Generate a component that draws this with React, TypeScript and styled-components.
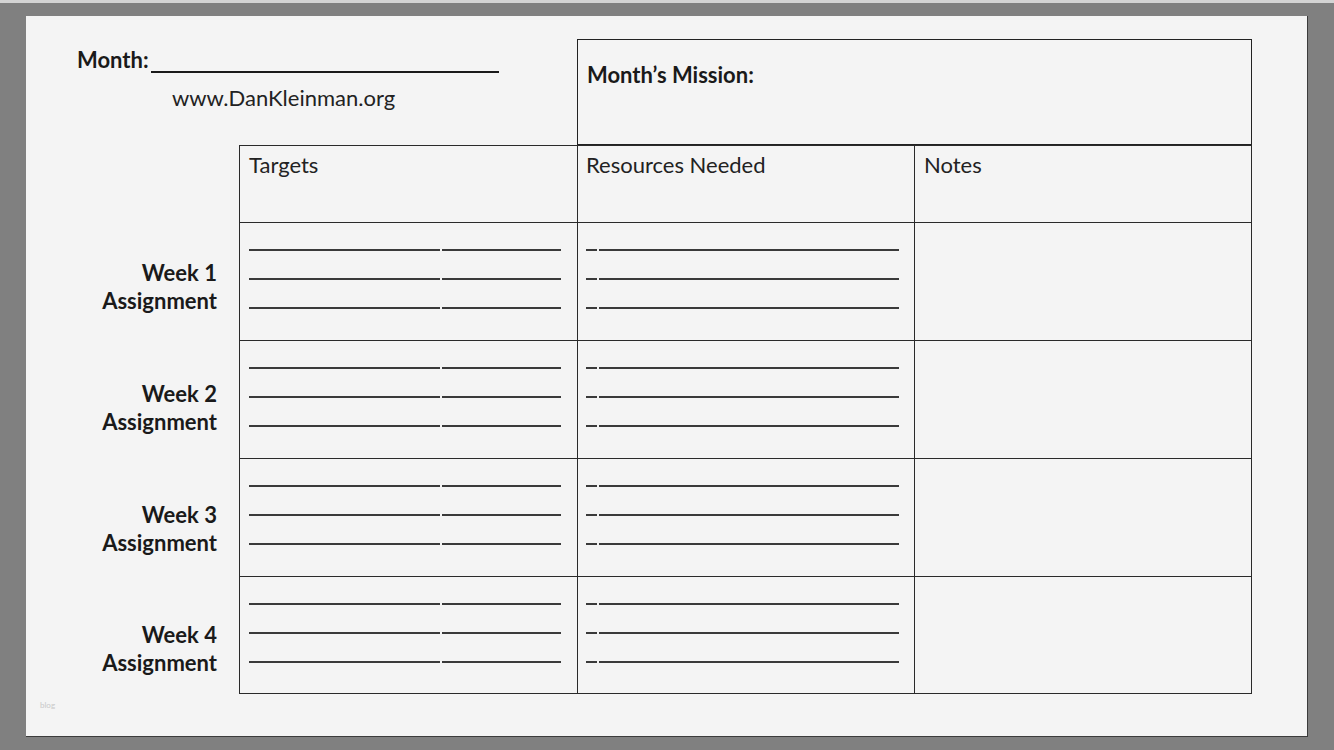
import React from "react";
import styled, { createGlobalStyle } from "styled-components";

const GlobalStyle = createGlobalStyle`
  html, body {
    margin: 0;
    padding: 0;
    background: #808080;
  }
  * {
    box-sizing: border-box;
  }
`;

const FONT = `"Lato", "Open Sans", "Liberation Sans", sans-serif`;

// week number + how far its label sits below the row centre
const weeks = [
  { n: 1, drop: 12 },
  { n: 2, drop: 18 },
  { n: 3, drop: 23 },
  { n: 4, drop: 27 },
];

const App: React.FC = () => {
  return (
    <>
      <GlobalStyle />
      <Frame>
        <Page>
          <TopRow>
            <MonthBlock>
              <MonthRow>
                <BoldText>Month:</BoldText>
                <Blank />
              </MonthRow>
              <Url>www.DanKleinman.org</Url>
            </MonthBlock>
            <MissionBox>
              <BoldText>Month’s Mission:</BoldText>
            </MissionBox>
          </TopRow>

          <BodyRow>
            <Labels>
              <HeaderSpacer />
              {weeks.map((w) => (
                <LabelCell key={w.n} $drop={w.drop}>
                  <BoldText>Week {w.n}</BoldText>
                  <BoldText>Assignment</BoldText>
                </LabelCell>
              ))}
              <Blog>blog</Blog>
            </Labels>

            <Table>
              <HeadCell $pad={9}>Targets</HeadCell>
              <HeadCell $pad={8}>Resources Needed</HeadCell>
              <HeadCell $pad={9}>Notes</HeadCell>
              {weeks.map((w) => (
                <React.Fragment key={w.n}>
                  <Cell $pad={9}>
                    {[0, 1, 2].map((i) => (
                      <WriteLine key={i}>
                        <Seg $w={191} />
                        <Seg $w={119} />
                      </WriteLine>
                    ))}
                  </Cell>
                  <Cell $pad={8}>
                    {[0, 1, 2].map((i) => (
                      <WriteLine key={i}>
                        <Seg $w={11} />
                        <Seg $w={300} />
                      </WriteLine>
                    ))}
                  </Cell>
                  <Cell $pad={9} />
                </React.Fragment>
              ))}
            </Table>
          </BodyRow>
        </Page>
      </Frame>
    </>
  );
};

export default App;

const Frame = styled.div`
  width: 1334px;
  height: 750px;
  border-top: 3px solid #d4d4d4;
  padding: 13px 26px 0 26px;
  background: #808080;
`;

const Page = styled.div`
  width: 1282px;
  height: 721px;
  background: #f4f4f4;
  border-right: 1px solid #3c3c3c;
  border-bottom: 1px solid #3c3c3c;
  padding-top: 23px;
  font-family: ${FONT};
  color: #1a1a1a;
`;

const TopRow = styled.div`
  display: flex;
  height: 106px;
`;

const MonthBlock = styled.div`
  width: 551px;
  padding: 9px 0 0 51px;
`;

const MonthRow = styled.div`
  display: flex;
  align-items: flex-end;
`;

const BoldText = styled.div`
  font-weight: 700;
  font-size: 22px;
  line-height: 24px;
  white-space: nowrap;
`;

const Blank = styled.div`
  width: 348px;
  height: 24px;
  margin-left: 2px;
  border-bottom: 2px solid #1a1a1a;
  margin-bottom: -1px;
`;

const Url = styled.div`
  margin: 14px 0 0 95px;
  font-size: 22px;
  line-height: 24px;
  color: #222;
`;

const MissionBox = styled.div`
  width: 675px;
  height: 106px;
  border: 1px solid #222;
  padding: 23px 9px 0 9px;
`;

const BodyRow = styled.div`
  display: flex;
  align-items: flex-start;
`;

const Labels = styled.div`
  width: 213px;
  display: flex;
  flex-direction: column;
`;

const HeaderSpacer = styled.div`
  height: 77px;
`;

const LabelCell = styled.div<{ $drop: number }>`
  height: 118px;
  padding: ${(p) => p.$drop}px 22px 0 0;
  display: flex;
  flex-direction: column;
  justify-content: center;
  align-items: flex-end;
  gap: 4px;
`;

const Blog = styled.div`
  margin: 6px 0 0 14px;
  font-size: 8px;
  color: #c8c8c8;
`;

const Table = styled.div`
  display: grid;
  grid-template-columns: 337px 336px 336px;
  grid-template-rows: 76px 117px 117px 117px 116px;
  gap: 1px;
  background: #2a2a2a;
  border: 1px solid #2a2a2a;
`;

const HeadCell = styled.div<{ $pad: number }>`
  background: #f4f4f4;
  padding: 7px 0 0 ${(p) => p.$pad}px;
  font-size: 22px;
  line-height: 24px;
  color: #222;
`;

const Cell = styled.div<{ $pad: number }>`
  background: #f4f4f4;
  padding: 26px 0 0 ${(p) => p.$pad}px;
  display: flex;
  flex-direction: column;
  gap: 27px;
`;

const WriteLine = styled.div`
  display: flex;
  gap: 2px;
  height: 2px;
`;

const Seg = styled.div<{ $w: number }>`
  width: ${(p) => p.$w}px;
  height: 2px;
  background: #3a3a3a;
`;
